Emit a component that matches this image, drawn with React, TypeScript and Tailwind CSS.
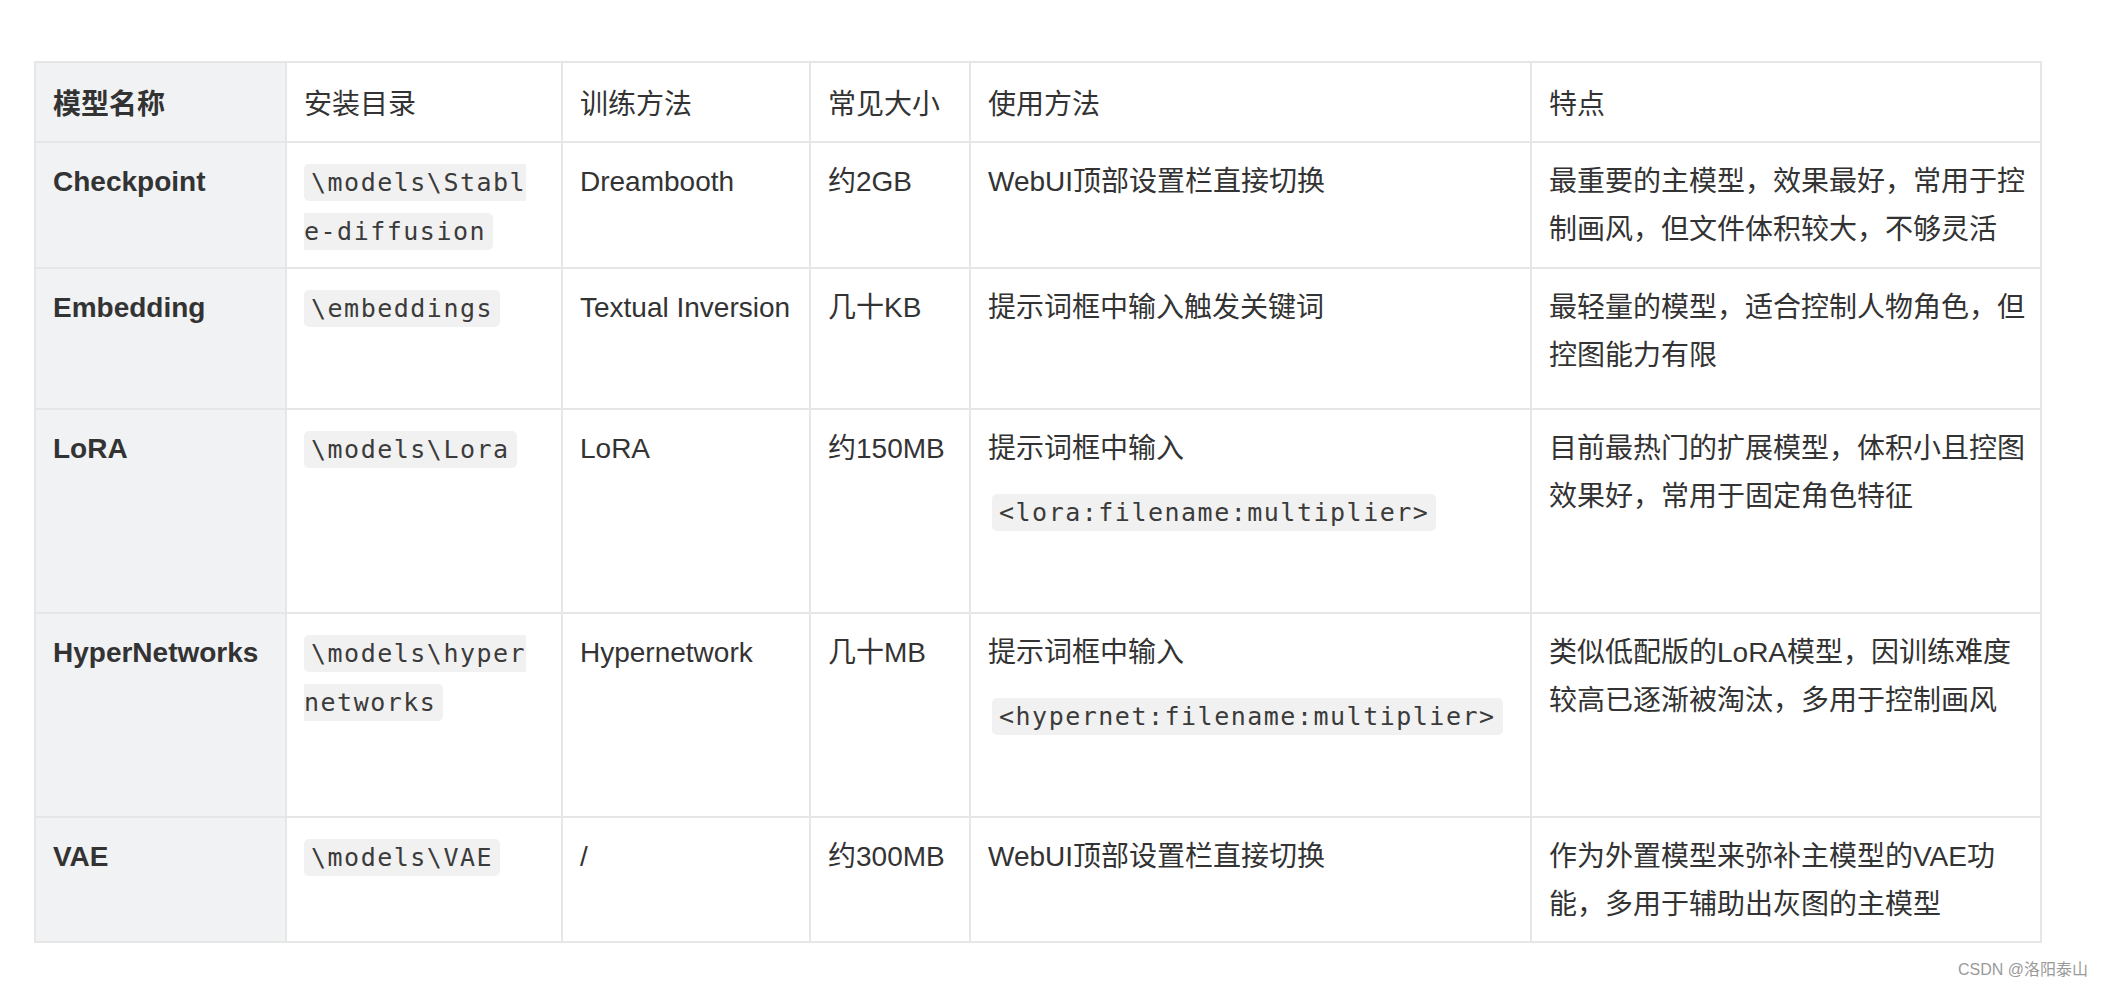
import React from 'react';

// Column widths include each cell's 2px right border
const COLUMN_WIDTHS = 'grid-cols-[251px_276px_248px_160px_561px_510px]';

const HEADERS = ['模型名称', '安装目录', '训练方法', '常见大小', '使用方法', '特点'];

const Code: React.FC<{ children: React.ReactNode }> = ({ children }) => (
  <code className="rounded-[5px] bg-[#f1f1f1] px-[7px] py-[4px] font-['DejaVu_Sans_Mono',monospace] text-[25px] tracking-[1.5px] text-[#3b3b3b]">
    {children}
  </code>
);

interface Row {
  height: string;
  cells: React.ReactNode[];
}

const ROWS: Row[] = [
  {
    height: 'h-[126px]',
    cells: [
      'Checkpoint',
      <Code>
        \models\Stabl
        <br />
        e-diffusion
      </Code>,
      'Dreambooth',
      '约2GB',
      'WebUI顶部设置栏直接切换',
      <>
        最重要的主模型，效果最好，常用于控
        <br />
        制画风，但文件体积较大，不够灵活
      </>,
    ],
  },
  {
    height: 'h-[141px]',
    cells: [
      'Embedding',
      <Code>\embeddings</Code>,
      'Textual Inversion',
      '几十KB',
      '提示词框中输入触发关键词',
      <>
        最轻量的模型，适合控制人物角色，但
        <br />
        控图能力有限
      </>,
    ],
  },
  {
    height: 'h-[204px]',
    cells: [
      'LoRA',
      <Code>\models\Lora</Code>,
      'LoRA',
      '约150MB',
      <>
        <div>提示词框中输入</div>
        <div className="mt-[15px] pl-[4px]">
          <Code>&lt;lora:filename:multiplier&gt;</Code>
        </div>
      </>,
      <>
        目前最热门的扩展模型，体积小且控图
        <br />
        效果好，常用于固定角色特征
      </>,
    ],
  },
  {
    height: 'h-[204px]',
    cells: [
      'HyperNetworks',
      <Code>
        \models\hyper
        <br />
        networks
      </Code>,
      'Hypernetwork',
      '几十MB',
      <>
        <div>提示词框中输入</div>
        <div className="mt-[15px] pl-[4px]">
          <Code>&lt;hypernet:filename:multiplier&gt;</Code>
        </div>
      </>,
      <>
        类似低配版的LoRA模型，因训练难度
        <br />
        较高已逐渐被淘汰，多用于控制画风
      </>,
    ],
  },
  {
    height: 'h-[125px]',
    cells: [
      'VAE',
      <Code>\models\VAE</Code>,
      '/',
      '约300MB',
      'WebUI顶部设置栏直接切换',
      <>
        作为外置模型来弥补主模型的VAE功
        <br />
        能，多用于辅助出灰图的主模型
      </>,
    ],
  },
];

export default function App() {
  return (
    <div className="min-h-screen w-[2104px] bg-white font-['Liberation_Sans','Noto_Sans_CJK_SC',sans-serif] text-[28px] leading-[48px] text-[#333333]">
      <div className="pl-[34px] pt-[61px]">
        <div className={`grid w-[2008px] ${COLUMN_WIDTHS} border-l-2 border-t-2 border-[#e6e6e6]`}>
          {HEADERS.map((label, i) => (
            <div
              key={label}
              className={`h-[80px] whitespace-nowrap border-b-2 border-r-2 border-[#e6e6e6] px-[17px] pt-[18px] ${
                i === 0 ? 'bg-[#f1f2f4] font-bold' : 'bg-white'
              }`}
            >
              {label}
            </div>
          ))}
          {ROWS.map((row, r) =>
            row.cells.map((cell, i) => (
              <div
                key={`${r}-${i}`}
                className={`${row.height} whitespace-nowrap border-b-2 border-r-2 border-[#e6e6e6] px-[17px] pt-[15px] ${
                  i === 0 ? 'bg-[#f1f2f4] font-bold' : 'bg-white'
                }`}
              >
                {cell}
              </div>
            ))
          )}
        </div>
      </div>
      <div className="mt-[16px] flex justify-end pr-[16px] text-[16px] leading-[22px] text-[#9a9a9a]">
        CSDN @洛阳泰山
      </div>
    </div>
  );
}
